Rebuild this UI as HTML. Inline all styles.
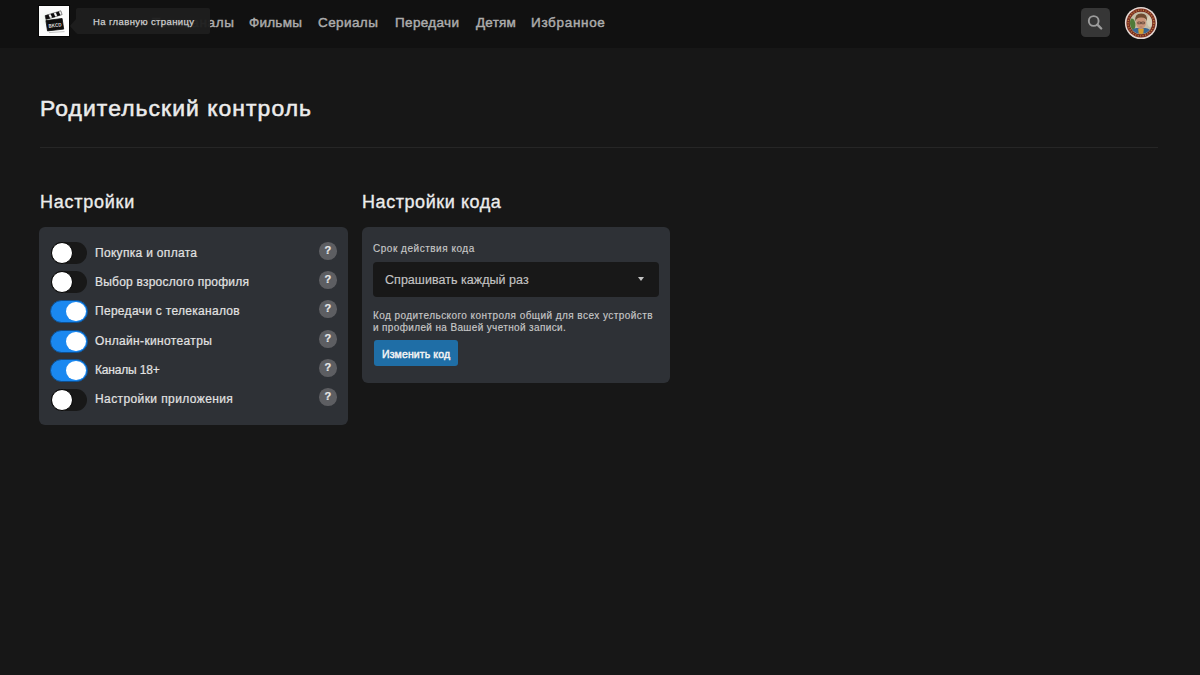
<!DOCTYPE html>
<html><head><meta charset="utf-8">
<style>
*{margin:0;padding:0;box-sizing:border-box}
html,body{width:1200px;height:675px;overflow:hidden;background:#171717;font-family:"Liberation Sans",sans-serif}
.a{position:absolute;white-space:nowrap;line-height:1}
#hdr{position:absolute;left:0;top:0;width:1200px;height:48px;background:#111111}
.nav{font-size:13.5px;color:#acacac;-webkit-text-stroke:0.45px #acacac;top:16px}
#logo{left:38px;top:5px;width:32px;height:32px;background:#050505}
#logo svg{position:absolute;left:1px;top:1px}
#tip{left:76px;top:8px;width:134px;height:26px;background:rgba(30,30,30,0.96);border-radius:2px}
#tip:before{content:"";position:absolute;left:-6px;top:11px;border-right:6px solid rgba(30,30,30,0.96);border-top:7px solid transparent;border-bottom:7px solid transparent}
#tiptxt{left:93px;top:17px;font-size:9.5px;color:#cfcfcf;-webkit-text-stroke:0.25px #cfcfcf;letter-spacing:0.39px}
#srch{left:1081px;top:8px;width:29px;height:29px;background:#363636;border-radius:4.5px}
#srch svg{position:absolute;left:0;top:0}
#ava{left:1124px;top:6px;width:34px;height:34px}
#title{left:40px;top:99px;font-size:21.5px;color:#ececec;-webkit-text-stroke:0.5px #ececec;letter-spacing:1px;transform:scaleX(1.064);transform-origin:0 0}
#line{position:absolute;left:40px;top:147px;width:1118px;height:1px;background:#262626}
.h2{font-size:18px;color:#ececec;-webkit-text-stroke:0.35px #ececec;top:193px}
.panel{position:absolute;background:#2e3136;border-radius:6px}
.tg{position:absolute;left:51px;width:36px;height:22px;border-radius:11px;background:#181818}
.tg i{position:absolute;left:0;top:0;width:22px;height:22px;border-radius:50%;background:#fff;border:1px solid #000}
.tg.on{background:#1a88f0;border:1px solid #0e4f90;left:50px;width:38px;height:23px;margin-top:-0.5px;border-radius:12px}
.tg.on i{left:14.5px;top:1px;width:20px;height:19.5px;border:none}
.lbl{left:95px;font-size:12px;color:#e2e2e2;-webkit-text-stroke:0.2px #e2e2e2}
.q{position:absolute;left:319px;width:17.5px;height:17.5px;border-radius:50%;background:#5d5e62}
.q b{position:absolute;left:0;top:3px;width:17.5px;text-align:center;font-size:11px;color:#e8e8e8;-webkit-text-stroke:0.2px #e8e8e8;line-height:1}
.sm{font-size:10px;color:#c8c8c8;-webkit-text-stroke:0.15px #c8c8c8}
#sel{left:373px;top:262px;width:286px;height:34.5px;background:#181818;border-radius:4px}
#seltxt{left:385px;top:274px;font-size:12.5px;color:#c4c4c4;-webkit-text-stroke:0.15px #c4c4c4;letter-spacing:0.04px}
#arr{left:637.5px;top:277px;border-top:4.5px solid #c4c4c4;border-left:3px solid transparent;border-right:3px solid transparent}
#btn{left:374px;top:340px;width:84px;height:26px;background:#1f6ea6;border-radius:3px}
#btntxt{left:382px;top:349px;font-size:10.5px;color:#f4f4f4;-webkit-text-stroke:0.45px #f4f4f4;letter-spacing:0.12px}
</style></head><body>
<div id="hdr"></div>
<div class="a nav" style="left:152px;letter-spacing:0.63px">Телеканалы</div>
<div class="a nav" style="left:249px;letter-spacing:0.23px">Фильмы</div>
<div class="a nav" style="left:318px;letter-spacing:0.41px">Сериалы</div>
<div class="a nav" style="left:395px;letter-spacing:0.35px">Передачи</div>
<div class="a nav" style="left:476px;letter-spacing:0.23px">Детям</div>
<div class="a nav" style="left:531px;letter-spacing:0.68px">Избранное</div>
<div class="a" id="logo"><svg width="30" height="30" viewBox="0 0 30 30"><rect width="30" height="30" fill="#fdfdfd"/><defs><radialGradient id="lg" cx="0.3" cy="0.45" r="0.55"><stop offset="0" stop-color="#e8f3ea"/><stop offset="1" stop-color="#fdfdfd" stop-opacity="0"/></radialGradient></defs><rect width="30" height="30" fill="url(#lg)"/>
<polygon points="6.9,14.6 23.1,12.5 24.7,23.1 8.5,24.9" fill="#0d0d0d" stroke="#0d0d0d" stroke-width="0.8" stroke-linejoin="round"/>
<polygon points="6.1,9.6 21.8,4.8 23.1,8.6 6.9,13.5" fill="#f2f2f2" stroke="#1a1a1a" stroke-width="0.5"/>
<polygon points="6.1,9.6 9.4,8.6 11.2,12.4 6.9,13.5" fill="#0d0d0d"/>
<polygon points="11.6,8.0 14.6,7.0 16.4,10.9 13.2,11.8" fill="#0d0d0d"/>
<polygon points="16.8,6.4 19.8,5.5 21.4,9.2 18.4,10.2" fill="#0d0d0d"/>
<text x="9.4" y="21.2" font-family="Liberation Sans" font-weight="bold" font-size="5.4" fill="#d8d8d8" textLength="13" lengthAdjust="spacingAndGlyphs" transform="rotate(-7 16 19)">BKCD</text>
<line x1="10" y1="26.6" x2="25.5" y2="25.6" stroke="#a0a0a0" stroke-width="0.6"/></svg></div>
<div class="a" id="tip"></div>
<div class="a" id="tiptxt">На главную страницу</div>
<div class="a" id="srch"><svg width="29" height="29" viewBox="0 0 29 29"><circle cx="12.7" cy="13" r="4.9" fill="none" stroke="#9c9c9c" stroke-width="1.9"/><line x1="16.4" y1="16.7" x2="20.2" y2="20.5" stroke="#9c9c9c" stroke-width="2.4" stroke-linecap="round"/></svg></div>
<div class="a" id="ava"><svg width="34" height="34" viewBox="0 0 34 34"><defs><clipPath id="ac"><circle cx="17" cy="17" r="11"/></clipPath></defs>
<circle cx="17" cy="17" r="16.1" fill="#e4d8d2"/>
<circle cx="17" cy="17" r="14.6" fill="#7a2c20"/>
<circle cx="17" cy="17" r="12.9" fill="none" stroke="#c08840" stroke-width="1.4" stroke-dasharray="1 1.5"/>
<circle cx="17" cy="17" r="11.2" fill="#b8b09a"/>
<g clip-path="url(#ac)">
<rect x="5" y="5" width="24" height="24" fill="#c4bca6"/>
<ellipse cx="8" cy="19" rx="3.4" ry="6.5" fill="#4e7a38"/>
<ellipse cx="26" cy="15" rx="3" ry="6" fill="#d8d0b8"/>
<path d="M5 31 Q6.5 22.5 12.5 22 L21.5 22 Q27.5 22.5 29 31 Z" fill="#3a6894"/>
<path d="M14.2 22.5 L19.8 22.5 L19 31 L15 31 Z" fill="#d8a030"/>
<ellipse cx="17" cy="16.6" rx="5" ry="6.3" fill="#c99478"/>
<path d="M11.3 15.6 Q10.2 7.6 17.2 7.6 Q24 7.8 22.8 15.2 Q21.8 11.2 17 11.6 Q12.6 11.4 11.3 15.6 Z" fill="#6e4a30"/>
<path d="M13.8 16 h2.8 v1.8 h-2.8 z M17.6 16 h2.8 v1.8 h-2.8 z" fill="none" stroke="#3a2a22" stroke-width="0.6"/>
<path d="M15.6 21 h2.8" stroke="#9a6656" stroke-width="0.6"/>
</g></svg></div>

<div class="a" id="title">Родительский контроль</div>
<div id="line"></div>
<div class="a h2" style="left:40px;letter-spacing:0.74px">Настройки</div>
<div class="a h2" style="left:362px;letter-spacing:0.57px">Настройки кода</div>

<div class="panel" style="left:39px;top:227px;width:309px;height:198px"></div>
<div class="tg" style="top:242px"><i></i></div>
<div class="tg" style="top:271px"><i></i></div>
<div class="tg on" style="top:300px"><i></i></div>
<div class="tg on" style="top:330px"><i></i></div>
<div class="tg on" style="top:359px"><i></i></div>
<div class="tg" style="top:389px"><i></i></div>
<div class="a lbl" style="top:247px;letter-spacing:0.31px">Покупка и оплата</div>
<div class="a lbl" style="top:276px;letter-spacing:0.22px">Выбор взрослого профиля</div>
<div class="a lbl" style="top:305px;letter-spacing:0.3px">Передачи с телеканалов</div>
<div class="a lbl" style="top:335px;letter-spacing:0.35px">Онлайн-кинотеатры</div>
<div class="a lbl" style="top:364px;letter-spacing:-0.18px">Каналы 18+</div>
<div class="a lbl" style="top:393px;letter-spacing:0.4px">Настройки приложения</div>
<div class="q" style="top:242px"><b>?</b></div>
<div class="q" style="top:271px"><b>?</b></div>
<div class="q" style="top:300px"><b>?</b></div>
<div class="q" style="top:330px"><b>?</b></div>
<div class="q" style="top:359px"><b>?</b></div>
<div class="q" style="top:388px"><b>?</b></div>

<div class="panel" style="left:362px;top:227px;width:308px;height:156px"></div>
<div class="a sm" style="left:373px;top:244px;letter-spacing:0.52px">Срок действия кода</div>
<div class="a" id="sel"></div>
<div class="a" id="seltxt">Спрашивать каждый раз</div>
<div class="a" id="arr"></div>
<div class="a sm" style="left:373px;top:310.5px;letter-spacing:0.44px">Код родительского контроля общий для всех устройств</div>
<div class="a sm" style="left:373px;top:323px;letter-spacing:0.36px">и профилей на Вашей учетной записи.</div>
<div class="a" id="btn"></div>
<div class="a" id="btntxt">Изменить код</div>
</body></html>
